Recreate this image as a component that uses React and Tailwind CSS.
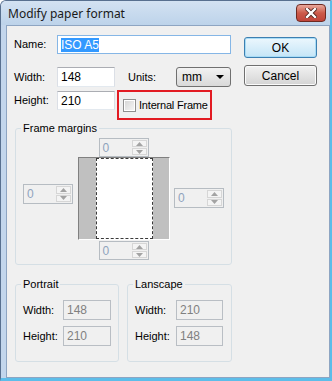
import React from "react";

const ui = { fontFamily: '"Liberation Sans", Arial, sans-serif' };

const Arrow = ({ up }) => (
    <svg width="7" height="4" viewBox="0 0 7 4">
        {up ? <path d="M0 4 L3.5 0 L7 4 Z" fill="#a3a3a3" /> : <path d="M0 0 L3.5 4 L7 0 Z" fill="#a3a3a3" />}
    </svg>
);

const Spinner = ({ h = "h-[19px]", extra = "" }) => (
    <div className={"w-[50px] flex items-stretch border border-[#b6bcc2] bg-[#f0f0f0] " + h + " " + extra}>
        <div className="flex-1 flex items-center pl-[3px] text-[12px] text-[#8fa3bd]">0</div>
        <div className="w-[16px] flex flex-col gap-[1px] py-[1px] pr-[1px]">
            <div className="flex-1 flex items-center justify-center border border-[#d6d6d6] bg-[#f4f4f4]"><Arrow up /></div>
            <div className="flex-1 flex items-center justify-center border border-[#d6d6d6] bg-[#f4f4f4]"><Arrow /></div>
        </div>
    </div>
);

const Disabled = ({ w, value }) => (
    <div className={"h-[20px] border border-[#b9bec4] bg-[#f0f0f0] flex items-center pl-[3px] text-[12px] text-[#808080] " + w}>{value}</div>
);

const SizeGroup = ({ title, w, labelW, inputW, width, height }) => (
    <fieldset className={"border border-[#d5dfe5] rounded-[3px] pb-[15px] " + w}>
        <legend className="ml-[5px] px-[2px] leading-[13px] text-[11px] text-black">{title}</legend>
        <div className="flex items-center mt-[9px] pl-[7px]">
            <span className={"text-[11px] " + labelW}>Width:</span>
            <Disabled w={inputW} value={width} />
        </div>
        <div className="flex items-center mt-[6px] pl-[7px]">
            <span className={"text-[11px] " + labelW}>Height:</span>
            <Disabled w={inputW} value={height} />
        </div>
    </fieldset>
);

const App = () => {
    return (
        <div style={ui} className="w-[332px] h-[381px] flex flex-col bg-[#c3d6ec] border-l border-t border-[#58708f] border-r-2 border-b-[3px] border-r-[#5dbde9] border-b-[#5dbde9] rounded-tl-[6px] overflow-hidden text-black">
            {/* title bar */}
            <div className="h-[24px] flex items-start justify-between pl-[7px] pr-[4px] pt-[3px] bg-gradient-to-b from-[#d3e2f2] to-[#bdd3ea]">
                <span style={{ fontFamily: '"Noto Sans", sans-serif' }} className="text-[12px] leading-[20px] text-[#1a1a1a]">Modify paper format</span>
                <div className="w-[30px] h-[18px] rounded-[4px] border border-[#6e2a22] bg-gradient-to-b from-[#e8a89c] via-[#cc5a4a] to-[#c0443a] flex items-center justify-center">
                    <svg width="12" height="10" viewBox="0 0 12 10">
                        <path d="M2 1 L10 9 M10 1 L2 9" stroke="#4a1f1a" strokeWidth="4" strokeLinecap="square" />
                        <path d="M2 1 L10 9 M10 1 L2 9" stroke="#ffffff" strokeWidth="2.4" strokeLinecap="square" />
                    </svg>
                </div>
            </div>

            {/* client area */}
            <div className="flex-1 ml-[5px] border border-[#8ea5c2] bg-[#f0f0f0] pt-[9px] pl-[7px]">
                <div className="flex">
                    <div className="w-[217px] flex flex-col text-[11px]">
                        <div className="flex items-center h-[19px]">
                            <span className="w-[43px]">Name:</span>
                            <div className="w-[174px] h-[19px] border border-[#85b6e6] bg-white flex items-center pl-[3px] text-[12px]">
                                <span className="bg-[#3399ff] text-white leading-[14px]">ISO A5</span>
                            </div>
                        </div>
                        <div className="flex items-center h-[20px] mt-[13px]">
                            <span className="w-[43px]">Width:</span>
                            <div className="w-[58px] h-[20px] border border-[#abadb3] border-b-[#e3e9ef] border-x-[#dbdfe6] bg-white flex items-center pl-[3px] text-[12px]">148</div>
                            <span className="ml-[13px] w-[48px]">Units:</span>
                            <div className="w-[55px] h-[20px] rounded-[3px] border border-[#707070] bg-gradient-to-b from-[#f2f2f2] to-[#d9d9d9] flex items-center justify-between pl-[5px] pr-[6px] text-[12px]">
                                <span>mm</span>
                                <svg width="8" height="4" viewBox="0 0 8 4"><path d="M0 0 L4 4 L8 0 Z" fill="#000" /></svg>
                            </div>
                        </div>
                        <div className="flex items-start mt-[3px]">
                            <span className="w-[43px] mt-[1px] h-[19px] flex items-center">Height:</span>
                            <div className="w-[58px] h-[19px] mt-[1px] border border-[#abadb3] border-b-[#e3e9ef] border-x-[#dbdfe6] bg-white flex items-center pl-[3px] text-[12px]">210</div>
                            <div className="ml-[2px] w-[95px] h-[30px] border-2 border-[#e21b23] flex items-center pl-[4px] whitespace-nowrap">
                                <div className="shrink-0 w-[13px] h-[13px] border border-[#8f8f8f] bg-white p-[1px]">
                                    <div className="w-full h-full bg-gradient-to-br from-[#d8d8d8] to-[#f4f4f4]" />
                                </div>
                                <span className="ml-[3px] tracking-[-0.2px]">Internal Frame</span>
                            </div>
                        </div>
                    </div>
                    <div className="ml-[13px] mt-[2px] flex flex-col text-[12px]">
                        <div className="w-[73px] h-[21px] rounded-[3px] border border-[#3c7fb1] bg-gradient-to-b from-[#ecf7fd] to-[#c4e5f7] shadow-[inset_0_0_0_1px_#a8dcf6] flex items-center justify-center">OK</div>
                        <div className="w-[73px] h-[21px] mt-[7px] rounded-[3px] border border-[#707070] bg-gradient-to-b from-[#f2f2f2] to-[#d4d4d4] shadow-[inset_0_0_0_1px_#fbfbfb] flex items-center justify-center">Cancel</div>
                    </div>
                </div>

                {/* frame margins */}
                <fieldset className="ml-[1px] mt-[2px] w-[217px] border border-[#d5dfe5] rounded-[3px] pb-[4px]">
                    <legend className="ml-[5px] px-[2px] leading-[13px] text-[11px]">Frame margins</legend>
                    <div className="flex flex-col items-center">
                        <Spinner extra="mt-[3px]" />
                        <div className="flex items-start">
                            <Spinner h="h-[20px]" extra="mt-[27px]" />
                            <div className="ml-[5px] w-[92px] h-[83px] flex bg-[#c0c0c0] border-t border-l border-[#808080] border-b border-r border-b-white border-r-white pl-[17px] pr-[16px]">
                                <div className="flex-1 bg-white border border-dashed border-[#3a3a3a]" />
                            </div>
                            <Spinner h="h-[20px]" extra="ml-[4px] mt-[31px]" />
                        </div>
                        <Spinner extra="mt-[1px]" />
                    </div>
                </fieldset>

                <div className="flex ml-[1px] mt-[13px] gap-[8px]">
                    <SizeGroup title="Portrait" w="w-[104px]" labelW="w-[40px]" inputW="w-[48px]" width="148" height="210" />
                    <SizeGroup title="Lanscape" w="w-[105px]" labelW="w-[41px]" inputW="w-[47px]" width="210" height="148" />
                </div>
            </div>
        </div>
    );
};

export default App;
